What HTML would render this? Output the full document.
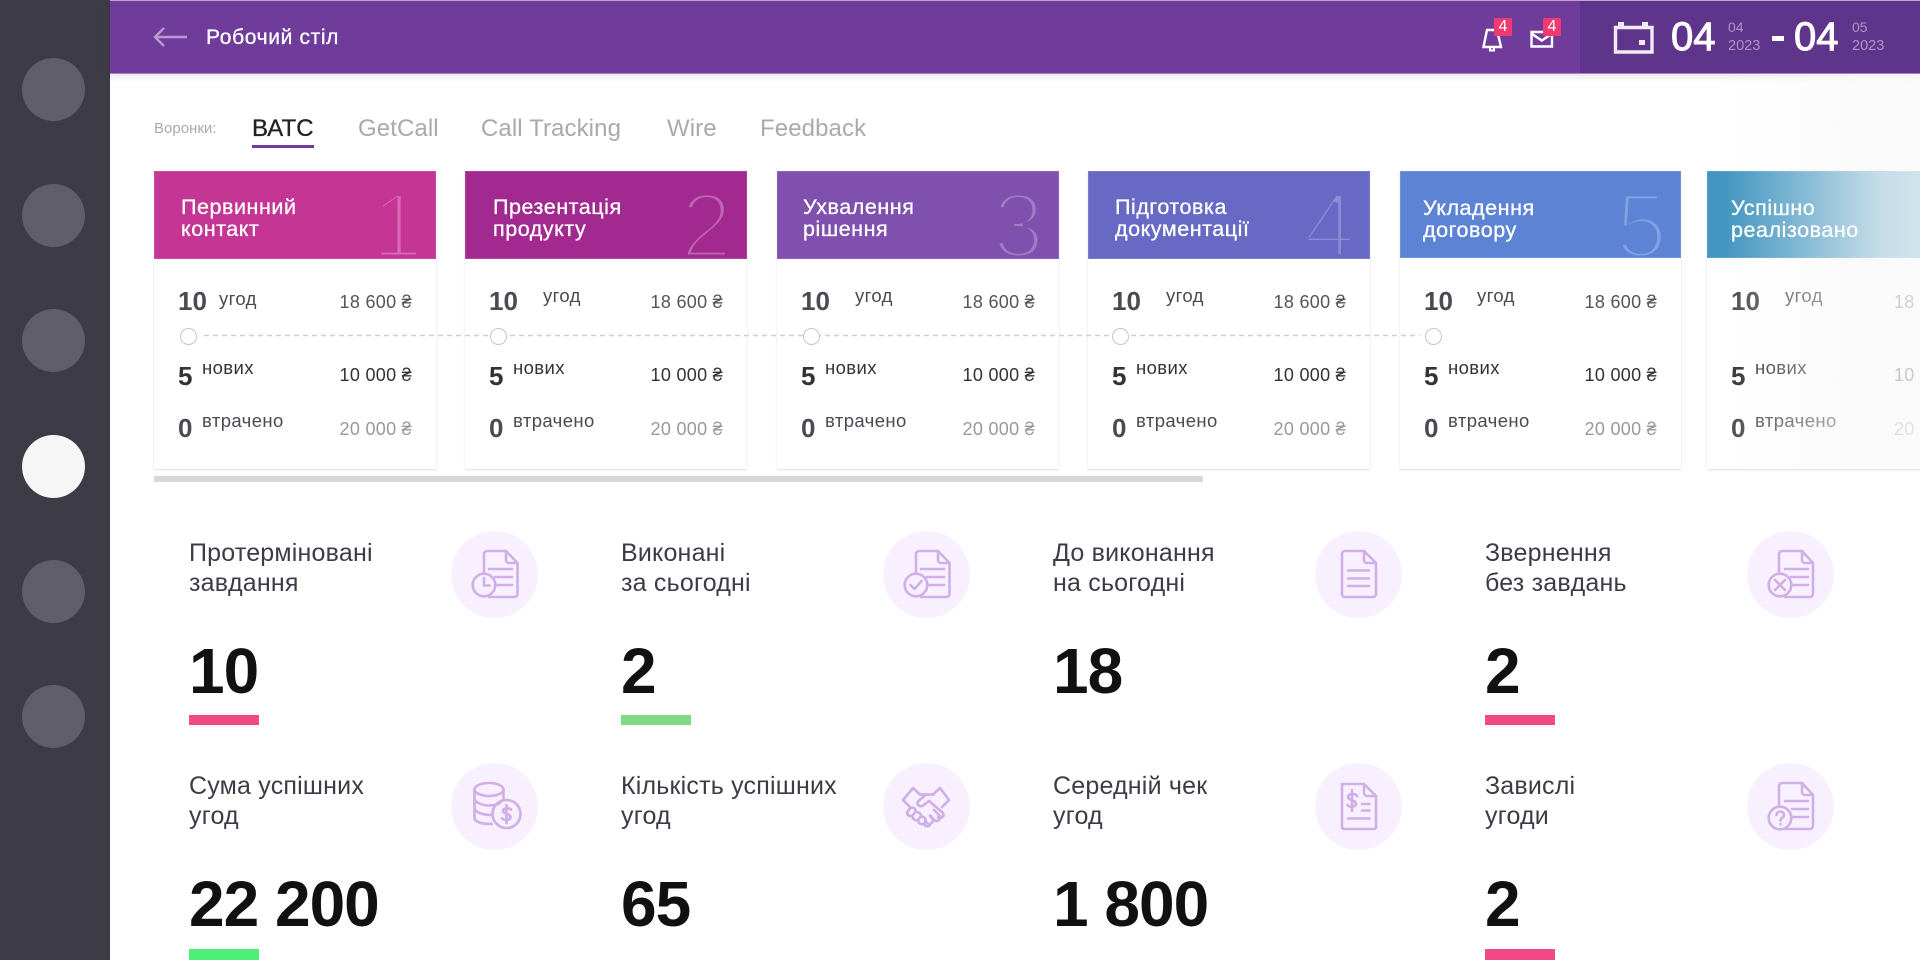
<!DOCTYPE html>
<html lang="uk"><head><meta charset="utf-8"><title>Робочий стіл</title>
<style>
*{box-sizing:border-box;margin:0;padding:0}
html,body{width:1920px;height:960px;overflow:hidden;background:#fff}
body{position:relative;font-family:"Liberation Sans","DejaVu Sans",sans-serif;color:#3d3b46}
.a{position:absolute;white-space:nowrap}
#side{position:absolute;left:0;top:0;width:110px;height:960px;background:#3d3b46}
#side i{position:absolute;left:22px;width:63px;height:63px;border-radius:50%;background:#605e68}
#head{position:absolute;left:110px;top:0;width:1810px;height:74px;background:#6f3c9c;border-top:1px solid #b9a3cf;border-bottom:1px solid #a782c8;box-shadow:0 2px 8px rgba(0,0,0,.12)}
#date{position:absolute;left:1580px;top:1px;width:340px;height:72px;background:#5f358b}
.badge{position:absolute;top:18px;width:18px;height:18px;background:#ee3a6e;border-radius:1px;color:#fff;font-size:16px;line-height:18px;text-align:center}
.tab{position:absolute;top:113px;font-size:24px;line-height:32px;color:#aaa;white-space:nowrap;letter-spacing:.1px}
.card{position:absolute;top:171px;width:282px;height:298px;background:#fff;box-shadow:0 1px 2px rgba(0,0,0,.13),0 0 1px rgba(0,0,0,.04)}
.h{position:absolute;left:0;top:0;width:100%;height:88px;overflow:hidden;color:#fff;border:1px solid rgba(255,255,255,.12)}
.t{position:absolute;top:24px;font-size:21.5px;line-height:22px;letter-spacing:.55px;white-space:nowrap;-webkit-text-stroke:.3px #fff}
.d{position:absolute;right:14px;top:9px;font-size:92px;line-height:90px;font-weight:400}
.n{position:absolute;left:24px;font-size:26px;line-height:30px;font-weight:700;color:#4a4a52;white-space:nowrap}
.l{position:absolute;font-size:18.5px;line-height:24px;letter-spacing:.4px;color:#4a4a52;white-space:nowrap}
.m{position:absolute;right:24px;font-size:18px;line-height:24px;color:#555;white-space:nowrap;letter-spacing:.3px}
.ring{position:absolute;top:328px;width:17px;height:17px;border:1.5px solid #c6c6c6;border-radius:50%;background:#fff}
.st{position:absolute;font-size:25px;line-height:29.5px;letter-spacing:.2px;color:#3d3b46;white-space:nowrap}
.big{position:absolute;font-size:64px;line-height:70px;font-weight:700;color:#111;letter-spacing:-1px;white-space:nowrap}
.bar{position:absolute;width:70px;height:10px}
.ic{position:absolute;width:87px;height:87px;border-radius:50%;background:#f8f0fe}
.ic svg{position:absolute;left:0;top:0;width:87px;height:87px;fill:none;stroke:#cfafe6;stroke-width:2.6;stroke-linecap:round;stroke-linejoin:round}
</style></head><body>

<div id="side"><i style="top:58px"></i><i style="top:184px"></i><i style="top:309px"></i><i style="top:435px;background:#f6f6f6"></i><i style="top:560px"></i><i style="top:685px"></i></div>

<div id="head"></div>
<svg class="a" style="left:152px;top:24px" width="36" height="26" fill="none" stroke="#b79ad2" stroke-width="2.4"><path d="M3 13H35M12 4L3 13L12 22"/></svg>
<div class="a" style="left:206px;top:25px;font-size:21px;line-height:26px;letter-spacing:.65px;color:#fff;-webkit-text-stroke:.3px #fff">Робочий стіл</div>

<svg class="a" style="left:1480px;top:26px" width="26" height="28" fill="none" stroke="#fff" stroke-width="2.4"><path d="M7 4H17L21 21H3.500Z"/><path d="M10 22v2.500h4V22" stroke-width="2"/></svg>
<div class="badge" style="left:1494px">4</div>
<svg class="a" style="left:1528px;top:28px" width="28" height="22" fill="none" stroke="#fff" stroke-width="2.4"><path d="M3.500 4H24V18.500H3.500Z"/><path d="M4 6L13.800 12.500L23.500 6"/></svg>
<div class="badge" style="left:1543px">4</div>

<div id="date"></div>
<svg class="a" style="left:1612px;top:19px" width="44" height="36" fill="none" stroke="#f1ebf6" stroke-width="3.4"><path d="M3.500 8.500H40V33H3.500Z"/><path d="M9 3V9M33 3V9" stroke-width="6"/><rect x="27" y="21" width="6" height="5" fill="#f1ebf6" stroke="none"/></svg>
<div class="a" style="left:1671px;top:14px;font-size:40px;line-height:46px;color:#fff;-webkit-text-stroke:1px #fff">04</div>
<div class="a" style="left:1728px;top:19px;font-size:14px;line-height:16px;color:#ae95c6">04</div>
<div class="a" style="left:1728px;top:38px;font-size:14.5px;line-height:16px;color:#ae95c6">2023</div>
<div class="a" style="left:1772px;top:36px;width:12px;height:5px;background:#fff"></div>
<div class="a" style="left:1794px;top:14px;font-size:40px;line-height:46px;color:#fff;-webkit-text-stroke:1px #fff">04</div>
<div class="a" style="left:1852px;top:19px;font-size:14px;line-height:16px;color:#ae95c6">05</div>
<div class="a" style="left:1852px;top:38px;font-size:14.5px;line-height:16px;color:#ae95c6">2023</div>

<div class="a" style="left:154px;top:121px;font-size:15px;line-height:16px;color:#aaa">Воронки:</div>
<div class="tab" style="left:252px;color:#222;-webkit-text-stroke:.3px #222">ВАТС</div>
<div class="a" style="left:252px;top:145px;width:62px;height:2.500px;background:#6f3c9c"></div>
<div class="tab" style="left:358px">GetCall</div>
<div class="tab" style="left:481px">Call Tracking</div>
<div class="tab" style="left:667px">Wire</div>
<div class="tab" style="left:760px">Feedback</div>

<!-- card 1 -->
<div class="card" style="left:154px">
 <div class="h" style="background:#c43594"><div class="t" style="left:26px">Первинний<br>контакт</div><div class="d" style="color:#d86bb3;-webkit-text-stroke:5px #c43594;right:12px">1</div></div>
 <div class="n" style="top:115px">10</div><div class="l" style="left:65px;top:116px">угод</div><div class="m" style="top:119px">18 600 ₴</div>
 <div class="n" style="top:190px;color:#333">5</div><div class="l" style="left:48px;top:185px;color:#333">нових</div><div class="m" style="top:192px;color:#333">10 000 ₴</div>
 <div class="n" style="top:242px">0</div><div class="l" style="left:48px;top:238px">втрачено</div><div class="m" style="top:246px;color:#999">20 000 ₴</div>
</div>
<!-- card 2 -->
<div class="card" style="left:465px">
 <div class="h" style="background:#a1298f"><div class="t" style="left:27px">Презентація<br>продукту</div><div class="d" style="color:#bd65af;-webkit-text-stroke:5px #a1298f">2</div></div>
 <div class="n" style="top:115px">10</div><div class="l" style="left:78px;top:113px">угод</div><div class="m" style="top:119px">18 600 ₴</div>
 <div class="n" style="top:190px;color:#333">5</div><div class="l" style="left:48px;top:185px;color:#333">нових</div><div class="m" style="top:192px;color:#333">10 000 ₴</div>
 <div class="n" style="top:242px">0</div><div class="l" style="left:48px;top:238px">втрачено</div><div class="m" style="top:246px;color:#999">20 000 ₴</div>
</div>
<!-- card 3 -->
<div class="card" style="left:777px">
 <div class="h" style="background:#7f50ae"><div class="t" style="left:25px">Ухвалення<br>рішення</div><div class="d" style="color:#9f7cc3;-webkit-text-stroke:5px #7f50ae">3</div></div>
 <div class="n" style="top:115px">10</div><div class="l" style="left:78px;top:113px">угод</div><div class="m" style="top:119px">18 600 ₴</div>
 <div class="n" style="top:190px;color:#333">5</div><div class="l" style="left:48px;top:185px;color:#333">нових</div><div class="m" style="top:192px;color:#333">10 000 ₴</div>
 <div class="n" style="top:242px">0</div><div class="l" style="left:48px;top:238px">втрачено</div><div class="m" style="top:246px;color:#999">20 000 ₴</div>
</div>
<!-- card 4 -->
<div class="card" style="left:1088px">
 <div class="h" style="background:#6869c5"><div class="t" style="left:26px">Підготовка<br>документації</div><div class="d" style="color:#8c8dd4;-webkit-text-stroke:5px #6869c5">4</div></div>
 <div class="n" style="top:115px">10</div><div class="l" style="left:78px;top:113px">угод</div><div class="m" style="top:119px">18 600 ₴</div>
 <div class="n" style="top:190px;color:#333">5</div><div class="l" style="left:48px;top:185px;color:#333">нових</div><div class="m" style="top:192px;color:#333">10 000 ₴</div>
 <div class="n" style="top:242px">0</div><div class="l" style="left:48px;top:238px">втрачено</div><div class="m" style="top:246px;color:#999">20 000 ₴</div>
</div>
<!-- card 5 -->
<div class="card" style="left:1400px;width:281px">
 <div class="h" style="background:#5d84d4;height:87px"><div class="t" style="left:22px;top:25px">Укладення<br>договору</div><div class="d" style="color:#83a1e0;-webkit-text-stroke:5px #5d84d4;right:13px">5</div></div>
 <div class="n" style="top:115px">10</div><div class="l" style="left:77px;top:113px">угод</div><div class="m" style="top:119px">18 600 ₴</div>
 <div class="n" style="top:190px;color:#333">5</div><div class="l" style="left:48px;top:185px;color:#333">нових</div><div class="m" style="top:192px;color:#333">10 000 ₴</div>
 <div class="n" style="top:242px">0</div><div class="l" style="left:48px;top:238px">втрачено</div><div class="m" style="top:246px;color:#999">20 000 ₴</div>
</div>
<!-- card 6 -->
<div class="card" style="left:1707px;width:281px">
 <div class="h" style="background:#4396c0;height:87px"><div class="t" style="left:23px;top:25px">Успішно<br>реалізовано</div></div>
 <div class="n" style="top:115px;left:24px">10</div><div class="l" style="left:78px;top:113px">угод</div><div class="m" style="top:119px;left:187px;right:auto">18 600 ₴</div>
 <div class="n" style="top:190px;color:#333">5</div><div class="l" style="left:48px;top:185px;color:#333">нових</div><div class="m" style="top:192px;left:187px;right:auto;color:#333">10 000 ₴</div>
 <div class="n" style="top:242px">0</div><div class="l" style="left:48px;top:238px">втрачено</div><div class="m" style="top:246px;left:187px;right:auto;color:#999">20 000 ₴</div>
</div>

<!-- timeline -->
<svg class="a" style="left:196px;top:334px" width="1230" height="3"><path d="M8 1.500H1224" stroke="#cfcfcf" stroke-width="1.4" stroke-dasharray="5 4" fill="none"/></svg>
<div class="ring" style="left:180px"></div>
<div class="ring" style="left:490px"></div>
<div class="ring" style="left:803px"></div>
<div class="ring" style="left:1112px"></div>
<div class="ring" style="left:1425px"></div>

<div class="a" style="left:154px;top:476px;width:1049px;height:6px;background:#d8d8dc"></div>
<div class="a" style="left:1725px;top:74px;width:195px;height:392px;background:linear-gradient(90deg,rgba(248,248,248,0) 0,rgba(248,248,248,.72) 80%,rgba(248,248,248,.78) 100%)"></div>

<!-- stats row 1 -->
<div class="st" style="left:189px;top:539px">Протерміновані<br>завдання</div>
<div class="ic" style="left:451px;top:531px"><svg viewBox="0 0 87 87"><path d="M33 42V23a3 3 0 0 1 3-3H55L66.500 32V63a3 3 0 0 1-3 3H38"/><path d="M55 20v9a3 3 0 0 0 3 3h8.500"/><path d="M38 38H61M44 46H61M44 54H61"/><circle cx="33" cy="54" r="11.300"/><path d="M33 47V54.500H38.500"/></svg></div>
<div class="big" style="left:189px;top:636px">10</div>
<div class="bar" style="left:189px;top:715px;background:#f04a86"></div>

<div class="st" style="left:621px;top:539px">Виконані<br>за сьогодні</div>
<div class="ic" style="left:883px;top:531px"><svg viewBox="0 0 87 87"><path d="M33 42V23a3 3 0 0 1 3-3H55L66.500 32V63a3 3 0 0 1-3 3H38"/><path d="M55 20v9a3 3 0 0 0 3 3h8.500"/><path d="M38 38H61M44 46H61M44 54H61"/><circle cx="33" cy="54" r="11.300"/><path d="M27.500 54L31.500 58L38.500 50"/></svg></div>
<div class="big" style="left:621px;top:636px">2</div>
<div class="bar" style="left:621px;top:715px;background:#7fdc85"></div>

<div class="st" style="left:1053px;top:539px">До виконання<br>на сьогодні</div>
<div class="ic" style="left:1315px;top:531px"><svg viewBox="0 0 87 87"><path d="M27 23a3 3 0 0 1 3-3H49L61 32V63a3 3 0 0 1-3 3H30a3 3 0 0 1-3-3Z"/><path d="M49 20v9a3 3 0 0 0 3 3h9"/><path d="M33 39.500H54M33 47.500H54M33 55H54"/></svg></div>
<div class="big" style="left:1053px;top:636px">18</div>

<div class="st" style="left:1485px;top:539px">Звернення<br>без завдань</div>
<div class="ic" style="left:1747px;top:531px"><svg viewBox="0 0 87 87"><path d="M32 42V23a3 3 0 0 1 3-3H55L66 32V63a3 3 0 0 1-3 3H38"/><path d="M55 20v9a3 3 0 0 0 3 3h8"/><path d="M38 38H61M44 46H61M44 54H61"/><circle cx="33" cy="54" r="11.300"/><path d="M28 49L38 59M38 49L28 59"/></svg></div>
<div class="big" style="left:1485px;top:636px">2</div>
<div class="bar" style="left:1485px;top:715px;background:#f04a86"></div>

<!-- stats row 2 -->
<div class="st" style="left:189px;top:772px">Сума успішних<br>угод</div>
<div class="ic" style="left:451px;top:763px"><svg viewBox="0 0 87 87"><ellipse cx="38" cy="26.500" rx="14.500" ry="6.500"/><path d="M23.500 26.500V55C23.500 58 28 61 41 61M52.500 26.500V36M23.500 35.500C24 39.500 31 42.500 38 42.500C43 42.500 47 41.500 49.500 39.500M23.500 45C24 49 31 52 40.500 52"/><circle cx="55.500" cy="51" r="14"/><path d="M60 46.500C59 45 53 44.500 52 47.500C51 51 60 50.500 59.500 54.500C59 57.500 53 57.500 51 55.500M55.500 42V60"/></svg></div>
<div class="big" style="left:189px;top:869px">22 200</div>
<div class="bar" style="left:189px;top:949px;height:11px;background:#4fee7a"></div>

<div class="st" style="left:621px;top:772px">Кількість успішних<br>угод</div>
<div class="ic" style="left:883px;top:763px"><svg viewBox="0 0 87 87"><path d="M20 37L30 25L37 31.500H50L57 25L66 37L59 44"/><path d="M20 37L27 44"/><path d="M51 31.500H43L35 38.500C33 41.500 37 44.500 40 42.500L46 38L60 50C62 54 57 56 55 54.500"/><path d="M51 47L57 53C58 57 54 59 52 57.500L47 53M47.500 52.500L50 56.500C50 60 46.500 62 44.500 60.500L42 58"/><path d="M27 45.500L24.500 48.500C23 52 27 54 29.500 52.500L32 49.500C34 46 29.500 43 27 45.500ZM29.500 52.500C29 56 33 58.500 35.500 56.500L37.500 54C39 50.500 34.500 48 32 49.500M35 56.500C35 60 38.500 62.500 41 60.500L42.500 58.500C43.500 55 40 53 37.500 54M41 60.500C41.500 64 46 64 47 61.500"/></svg></div>
<div class="big" style="left:621px;top:869px">65</div>

<div class="st" style="left:1053px;top:772px">Середній чек<br>угод</div>
<div class="ic" style="left:1315px;top:763px"><svg viewBox="0 0 87 87"><path d="M27 21H49L61 33V64a2 2 0 0 1-2 2H29a2 2 0 0 1-2-2Z"/><path d="M49 21v9a3 3 0 0 0 3 3h9"/><path d="M42 33C41 30.500 34 30 33 33.500C32 37 41 37 41 41C40.500 44.500 34 44.500 32.500 42M37 27V48"/><path d="M47 41H54.500M47 47.500H54.500M33 55.500H54.500"/></svg></div>
<div class="big" style="left:1053px;top:869px">1 800</div>

<div class="st" style="left:1485px;top:772px">Завислі<br>угоди</div>
<div class="ic" style="left:1747px;top:763px"><svg viewBox="0 0 87 87"><path d="M32 43V23a3 3 0 0 1 3-3H55L66 32V63a3 3 0 0 1-3 3H38"/><path d="M55 20v9a3 3 0 0 0 3 3h8"/><path d="M38 38H61M45 46H61M45 54H61"/><circle cx="33" cy="55" r="11.300"/><path d="M29.500 52C29.500 47.500 37 47.500 37 52C37 55 33.500 54.500 33.500 57.500M33.500 61V61.200"/></svg></div>
<div class="big" style="left:1485px;top:869px">2</div>
<div class="bar" style="left:1485px;top:949px;height:11px;background:#f04a86"></div>

</body></html>
